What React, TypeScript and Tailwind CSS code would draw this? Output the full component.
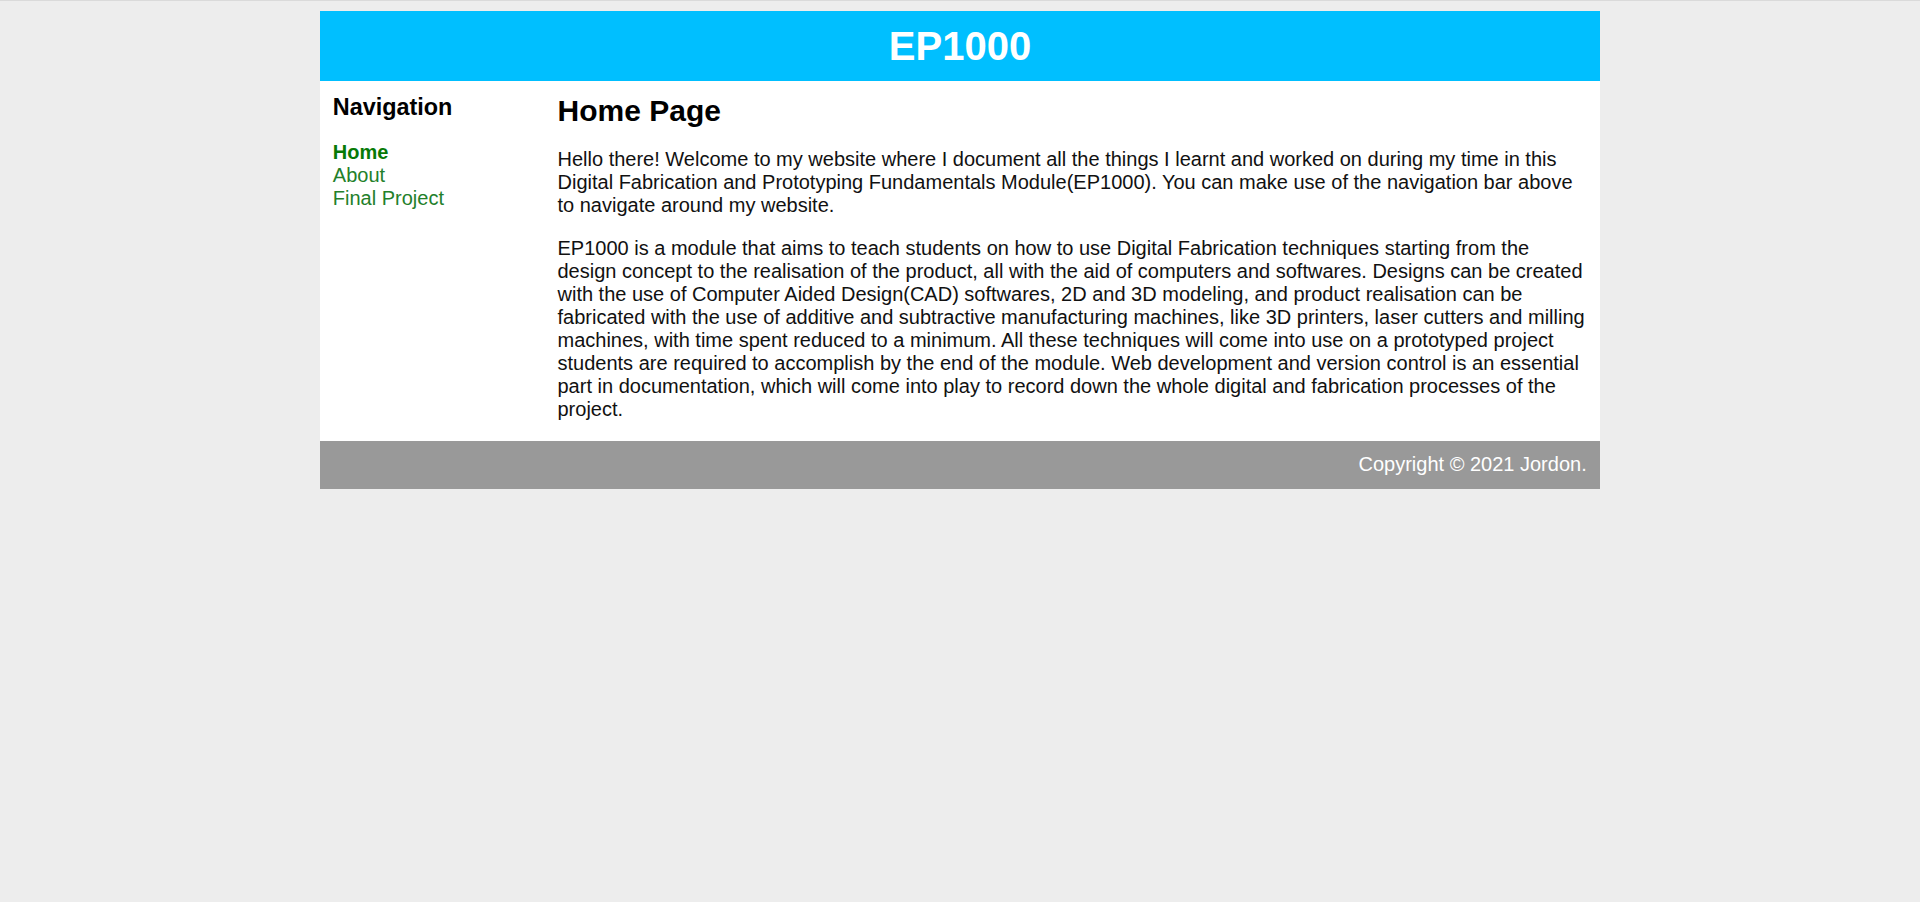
import React from "react";

export default function App() {
  return (
    <div
      className="min-h-[902px] bg-[#ededed] border-t border-[#dadada] pt-[10px] text-[20px] text-[#111]"
      style={{ fontFamily: '"Liberation Sans", Arial, sans-serif' }}
    >
      <div className="w-[1280px] mx-auto">
        <header className="bg-[#00bfff] h-[70px] flex items-center justify-center">
          <h1 className="text-[40px] font-bold text-white leading-[46px]">EP1000</h1>
        </header>
        <div className="bg-white flex pt-[12.5px] pb-[19.5px]">
          <nav className="w-[237.5px] shrink-0 pl-[12.8px]">
            <h3 className="text-[23.4px] font-bold text-black leading-[27px]">Navigation</h3>
            <ul className="mt-[20px] leading-[23px]">
              <li>
                <a className="font-bold text-[#077a07]" href="#">Home</a>
              </li>
              <li>
                <a className="text-[#23802a]" href="#">About</a>
              </li>
              <li>
                <a className="text-[#23802a]" href="#">Final Project</a>
              </li>
            </ul>
          </nav>
          <main className="flex-1 pr-[12.8px]">
            <h2 className="text-[30px] font-bold text-black leading-[34.5px]">Home Page</h2>
            <p className="mt-[20px] leading-[23px]">
              Hello there! Welcome to my website where I document all the things I learnt and worked on during my time in this Digital Fabrication and Prototyping Fundamentals Module(EP1000). You can make use of the navigation bar above to navigate around my website.
            </p>
            <p className="mt-[20px] leading-[23px]">
              EP1000 is a module that aims to teach students on how to use Digital Fabrication techniques starting from the design concept to the realisation of the product, all with the aid of computers and softwares. Designs can be created with the use of Computer Aided Design(CAD) softwares, 2D and 3D modeling, and product realisation can be fabricated with the use of additive and subtractive manufacturing machines, like 3D printers, laser cutters and milling machines, with time spent reduced to a minimum. All these techniques will come into use on a prototyped project students are required to accomplish by the end of the module. Web development and version control is an essential part in documentation, which will come into play to record down the whole digital and fabrication processes of the project.
            </p>
          </main>
        </div>
        <footer className="bg-[#999999] h-[48px] flex items-center justify-end pr-[13.3px]">
          <span className="text-white leading-[23px]">Copyright © 2021 Jordon.</span>
        </footer>
      </div>
    </div>
  );
}
